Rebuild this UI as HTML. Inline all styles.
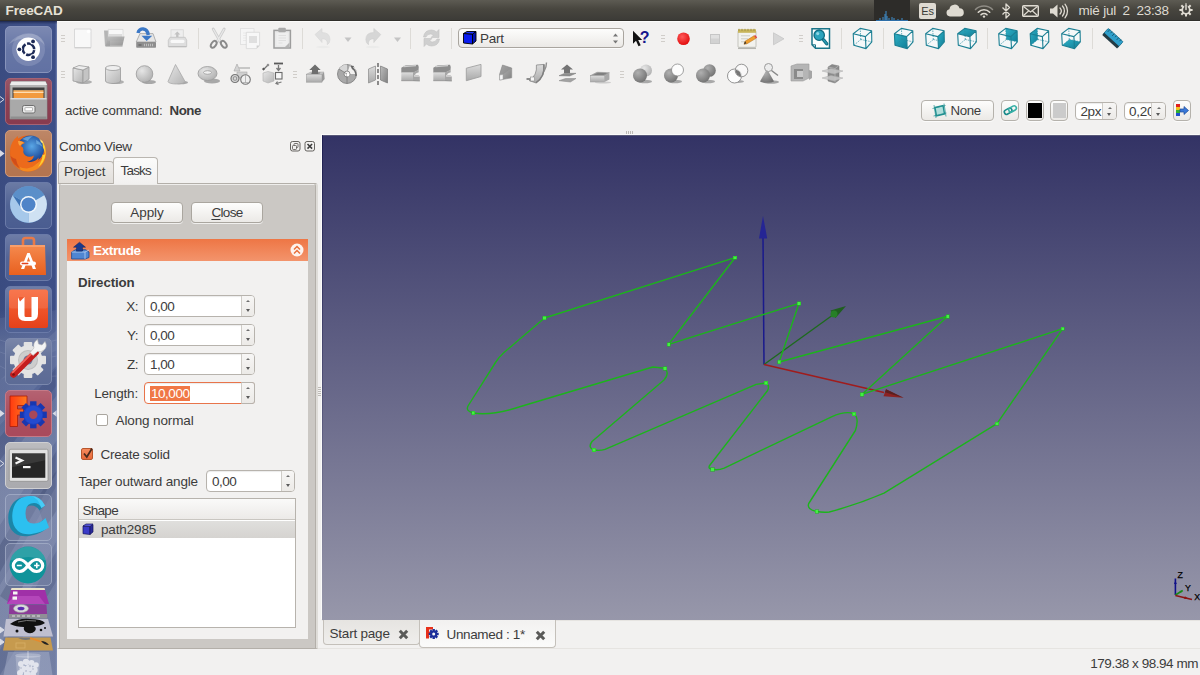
<!DOCTYPE html>
<html><head><meta charset="utf-8"><title>FreeCAD</title>
<style>
*{box-sizing:border-box;margin:0;padding:0}
html,body{width:1200px;height:675px;overflow:hidden;background:#f2f1f0;font-family:"Liberation Sans","DejaVu Sans",sans-serif;font-size:13px;color:#3c3c3c}
.abs{position:absolute}
#topbar{position:absolute;left:0;top:0;width:1200px;height:21px;background:linear-gradient(#5d5b53,#48463f 45%,#3c3b37);border-bottom:1px solid #2f2e2a}
#topbar .title{position:absolute;left:5.500px;top:2px;font-weight:bold;font-size:13.500px;line-height:17px;color:#e6e1d6;letter-spacing:-.1px}
#launcher{position:absolute;left:0;top:21px;width:57px;height:654px;background:linear-gradient(90deg,#3a4b80,#3f5189 60%,#3c4e86);overflow:hidden}
.tile{position:absolute;left:5px;width:46px;height:46px;border-radius:5px;border:1px solid rgba(255,255,255,.28);overflow:hidden}
.txt{position:absolute;white-space:nowrap;line-height:16px}
.btn{position:absolute;border:1px solid #b5b2ac;border-radius:4px;background:linear-gradient(#fdfdfc,#ebe9e6);box-shadow:0 1px 0 rgba(255,255,255,.7)}
.spin{position:absolute;border:1px solid #b7b3ad;border-radius:4px;background:#fff;box-shadow:inset 0 1px 1px rgba(0,0,0,.08)}
.spin .ar{position:absolute;right:0;top:0;bottom:0;width:13px;border-left:1px solid #cfccc7;background:linear-gradient(#f7f6f5,#eceae7);border-radius:0 3px 3px 0}
.spin .ar:before{content:"";position:absolute;left:50%;margin-left:-2px;top:22%;border:2px solid transparent;border-top:0;border-bottom:2.500px solid #6e6e6e}
.spin .ar:after{content:"";position:absolute;left:50%;margin-left:-2.500px;bottom:20%;border:2.500px solid transparent;border-bottom:0;border-top:3px solid #5a5a5a}
.spin span{position:absolute;left:5px;top:50%;margin-top:-7px;line-height:16px;white-space:nowrap;font-size:13.500px;letter-spacing:-.5px}
.sep{position:absolute;width:1px;background:#dddbd7}
.hnd{position:absolute;width:4px;height:7px;background:repeating-linear-gradient(#d0cdc9 0 1px,transparent 1px 3px)}
svg{position:absolute;overflow:visible}
</style></head><body>
<div id="topbar">
<div class="title">FreeCAD</div>
<div class="abs" style="left:874px;top:0;width:36px;height:21px;background:#2d2c29"></div>
<svg style="left:874px;top:0" width="36" height="21" viewBox="0 0 36 21"><path d="M2 20.5h32" stroke="#2d6ea8" stroke-width="1"/><path d="M6 20v-2M9 20v-3M11 20v-6M12 20v-9M13 20v-4M15 20v-2M18 20v-3M20 20v-2M24 20v-1M28 20v-2" stroke="#3f8fd0" stroke-width="1"/></svg>
<div class="abs" style="left:919px;top:3px;width:17px;height:16px;background:#dfdbd2;border-radius:2px;color:#3c3b37;font-size:11px;line-height:16px;text-align:center;letter-spacing:-.2px">Es</div>
<svg style="left:945px;top:3px" width="20" height="15" viewBox="0 0 20 15"><path d="M5 13.5a3.7 3.7 0 0 1-.6-7.3A5.2 5.2 0 0 1 14.500 5.200 4.200 4.200 0 0 1 15.500 13.500z" fill="#dfdbd2"/></svg>
<svg style="left:974px;top:4px" width="20" height="14" viewBox="0 0 20 14" fill="none" stroke-linecap="round"><path d="M1.500 5.500a12 12 0 0 1 17 0" stroke="#8f8c85" stroke-width="1.600"/><path d="M4.300 8.200a8 8 0 0 1 11.400 0" stroke="#dfdbd2" stroke-width="1.600"/><path d="M7 10.800a4.300 4.300 0 0 1 6 0" stroke="#dfdbd2" stroke-width="1.600"/><circle cx="10" cy="12.600" r="1.200" fill="#dfdbd2"/></svg>
<svg style="left:1001px;top:3px" width="10" height="16" viewBox="0 0 10 16" fill="none"><path d="M1.500 4.500l7 7-3.500 3.500v-14l3.500 3.500-7 7" stroke="#dfdbd2" stroke-width="1.300" stroke-linejoin="round"/></svg>
<svg style="left:1022px;top:5px" width="17" height="12" viewBox="0 0 17 12" fill="none"><rect x=".7" y=".7" width="15.600" height="10.600" rx="1" stroke="#dfdbd2" stroke-width="1.400"/><path d="M1.500 1.500l7 5.500 7-5.500M1.500 10.500l5-4.500M15.500 10.500l-5-4.500" stroke="#dfdbd2" stroke-width="1.200"/></svg>
<svg style="left:1049px;top:3px" width="20" height="16" viewBox="0 0 20 16" fill="none" stroke-linecap="round"><path d="M1 5.500h3l4.500-4v13l-4.500-4h-3z" fill="#dfdbd2"/><path d="M11 5a4.500 4.500 0 0 1 0 6M13.500 3a7.500 7.500 0 0 1 0 10M16 1.200a10.500 10.500 0 0 1 0 13.600" stroke="#dfdbd2" stroke-width="1.300"/></svg>
<div class="txt" style="left:1078.500px;top:2px;font-size:13.500px;line-height:17px;color:#dfdbd2;letter-spacing:-.2px">mié jul</div><div class="txt" style="left:1122.500px;top:2px;font-size:13.500px;line-height:17px;color:#dfdbd2">2</div><div class="txt" style="left:1136.500px;top:2px;font-size:13.500px;line-height:17px;color:#dfdbd2;letter-spacing:-.3px">23:38</div>
<svg style="left:1179px;top:3px" width="14" height="14" viewBox="0 0 18 17" fill="none"><g stroke="#dfdbd2" stroke-width="2.600"><path d="M9 0v17M.5 8.500h17M3 2.500l12 12M15 2.500l-12 12"/></g><circle cx="9" cy="8.500" r="6" fill="#dfdbd2"/><circle cx="9" cy="8.500" r="3.700" fill="#45443f"/><path d="M9 1.500v7" stroke="#45443f" stroke-width="4.400"/><path d="M9 2.500v5.500" stroke="#dfdbd2" stroke-width="1.900" stroke-linecap="round"/></svg>
</div>
<div id="launcher"></div>
<svg style="left:0;top:0" width="57" height="675" viewBox="0 0 57 675">
<defs>
<linearGradient id="tg" x1="0" y1="0" x2="0" y2="1"><stop offset="0" stop-color="#fff" stop-opacity=".32"/><stop offset=".5" stop-color="#fff" stop-opacity=".08"/><stop offset="1" stop-color="#fff" stop-opacity=".02"/></linearGradient>
<linearGradient id="wall" x1="0" y1="0" x2="0" y2="1"><stop offset="0" stop-color="#8f9bb8" stop-opacity="0"/><stop offset=".44" stop-color="#8f9bb8" stop-opacity="0"/><stop offset=".5" stop-color="#8f9bb8" stop-opacity=".3"/><stop offset="1" stop-color="#8f9bb8" stop-opacity=".4"/></linearGradient>
<linearGradient id="wall2" x1="0" y1="0" x2="0" y2="1"><stop offset="0" stop-color="#a3a8b8" stop-opacity="0"/><stop offset=".58" stop-color="#a3a8b8" stop-opacity="0"/><stop offset=".72" stop-color="#a3a8b8" stop-opacity=".3"/><stop offset="1" stop-color="#a3a8b8" stop-opacity=".3"/></linearGradient><radialGradient id="ffb" cx=".55" cy=".4" r=".6"><stop offset="0" stop-color="#5aa7e6"/><stop offset="1" stop-color="#123a8c"/></radialGradient>
<linearGradient id="org" x1="0" y1="0" x2="0" y2="1"><stop offset="0" stop-color="#f58a4e"/><stop offset="1" stop-color="#e8601f"/></linearGradient>
<linearGradient id="u1" x1="0" y1="0" x2="0" y2="1"><stop offset="0" stop-color="#f8683a"/><stop offset="1" stop-color="#e6411a"/></linearGradient>
<linearGradient id="fc" x1="0" y1="0" x2="1" y2="0"><stop offset="0" stop-color="#ff3a10"/><stop offset="1" stop-color="#ff7a20"/></linearGradient>
</defs>
<rect x="0" y="21" width="57" height="654" fill="url(#wall)"/><rect x="0" y="21" width="57" height="654" fill="url(#wall2)"/>
<g opacity=".9"><path d="M0 318l57-8v40l-57 30z" fill="#8a96b8" opacity=".18"/>
<path d="M0 380l57-50v35l-57 60z" fill="#a9b3cc" opacity=".16"/>
<path d="M0 437l57-70v18l-57 75z" fill="#27345f" opacity=".22"/>
<path d="M0 470l57-75v45l-57 85z" fill="#b4bcd2" opacity=".2"/>
<path d="M0 545l57-95v22l-57 100z" fill="#222e58" opacity=".25"/>
<path d="M0 585l57-100v55l-57 105z" fill="#b9c0d6" opacity=".2"/>
<path d="M0 650l57-100v30l-57 95z" fill="#2a3663" opacity=".2"/>
<path d="M0 596l20-34 12 4-18 40z" fill="#1c274f" opacity=".22"/>
<path d="M36 500l21-30v40l-12 18z" fill="#1c274f" opacity=".2"/>
<path d="M0 340q20 10 57 0M0 352q25 12 57 4M0 366q20 14 57 10" stroke="#c5cce0" stroke-width=".7" fill="none" opacity=".25"/>
</g>
<!-- 1 dash -->
<rect x="5.500" y="26.500" width="46" height="46" rx="4.500" fill="#6070a2" stroke="#8793bb"/>
<rect x="6" y="27" width="45" height="45" rx="4" fill="url(#tg)" opacity=".55"/>
<circle cx="28.500" cy="49.500" r="16.500" fill="#9aa6c8" opacity=".4"/><path d="M9 44q8-12 24-10 10 2 12 12-6-9-16-8-12 0-20 6z" fill="#fff" opacity=".18"/>
<circle cx="28.300" cy="49.300" r="11.700" fill="#fff"/>
<circle cx="28.500" cy="49.300" r="5.700" fill="none" stroke="#1d2a57" stroke-width="2.500" stroke-dasharray="10.340 1.600" stroke-dashoffset="-.8"/>
<g fill="#fff"><circle cx="19.400" cy="49.300" r="2.900"/><circle cx="33.050" cy="41.400" r="2.900"/><circle cx="33.050" cy="57.200" r="2.900"/></g><circle cx="19.400" cy="49.300" r="1.900" fill="#1d2a57"/><circle cx="33.050" cy="41.400" r="1.900" fill="#1d2a57"/><circle cx="33.050" cy="57.200" r="1.900" fill="#1d2a57"/>
<!-- 2 files -->
<rect x="5.500" y="78.500" width="46" height="46" rx="4.500" fill="#87394d" stroke="#a56374"/>
<rect x="6" y="79" width="45" height="45" rx="4" fill="url(#tg)" opacity=".45"/>
<path d="M11.500 81.500h34l1.500 3v34.500h-37v-34.500z" fill="#b4b4b4" stroke="#858585" stroke-width=".8"/>
<path d="M11.500 81.500h34l1.500 3.500h-37z" fill="#ececec"/>
<rect x="12.500" y="87.500" width="32" height="10.500" fill="#3f3f3f"/>
<path d="M13.500 90.500h30v7.500h-30z" fill="#f29a3e"/><path d="M13.500 92.300h30" stroke="#ffe9c8" stroke-width="1.100"/><path d="M13.500 90.800h30" stroke="#ffc27a" stroke-width=".8"/>
<path d="M10.500 98h36v20.500h-36z" fill="#a9a9a9"/><path d="M10.500 98h36v1.600h-36z" fill="#dadada"/><path d="M10.500 116.500h36v2.500h-36z" fill="#8f8f8f"/>
<rect x="22.500" y="105.500" width="12.500" height="7.500" rx="1.800" fill="#ececec" stroke="#6f6f6f" stroke-width="1"/><rect x="25" y="107.600" width="7.500" height="3.300" rx=".5" fill="#fff" stroke="#8a8a8a" stroke-width=".6"/>
<!-- 3 firefox -->
<rect x="5.500" y="130.500" width="46" height="46" rx="4.500" fill="#b3734e" stroke="#cf9b7c"/>
<rect x="6" y="131" width="45" height="45" rx="4" fill="url(#tg)" opacity=".45"/>
<circle cx="28" cy="153.500" r="18" fill="#e8661a"/>
<path d="M28 171.500a18 18 0 0 0 17.500-22q-2 14-17.500 17.500-9 1-15-5.500 5 10 15 10z" fill="#f58a1f"/>
<circle cx="30.500" cy="149" r="13.500" fill="url(#ffb)"/>
<path d="M22 139q5-3.500 11-2.500-4 1.500-5 4.500zM36 140q5 2 6.500 7-3-3-6-3z" fill="#8fd0f5" opacity=".5"/>
<path d="M10 150q1-9 8-14-.5 3 1 5 3.500-.5 6 2-3 .5-4 3 2.500 1 2.500 4-1 3 2 5.500 4 2.500 8.500 0-1 5-7 6.500 7 1 12-4.500-2 10-12 11-9 0-14-8-3-5-2.500-10.500z" fill="#ec6a1b"/>
<path d="M18 141q3.500-.5 6 2-3 .5-4 3-2-2-2-5z" fill="#f9a03a"/>
<path d="M41.500 140q5 6 4 14.500-1 8-7.500 12.500 4.500-6 4.500-12.500 1.500 1 2.500-.5-.5-4-2-6.500 0-3-1.500-7.500z" fill="#ffcf33"/>
<path d="M39 138.500q3 1.500 4.500 5-1-1-2.500-1-.5-2.500-2-4z" fill="#ffe27a"/>
<path d="M10.500 156q2 9 10 13-4-5-4.500-10-3-.5-5.500-3z" fill="#c9461a" opacity=".8"/>
<!-- 4 chromium -->
<rect x="5.500" y="182.500" width="46" height="46" rx="4.500" fill="#485b8f" stroke="#6a7aa8"/>
<rect x="6" y="183" width="45" height="45" rx="4" fill="url(#tg)" opacity=".6"/>
<circle cx="28.500" cy="204.500" r="18.300" fill="#6ea1d4"/>
<path d="M28.500 204.500L12.700 195.300A18.300 18.300 0 0 1 44.300 195.300z" fill="#5b8fc9"/>
<path d="M28.500 204.500L44.300 195.300A18.300 18.300 0 0 1 28.500 222.800z" fill="#cfe1f3"/>
<path d="M28.500 204.500L28.500 222.800A18.300 18.300 0 0 1 12.700 195.300z" fill="#a6c8ea"/>
<path d="M12.700 195.300l9 13.700 6.800-4.500z" fill="#3e74b5"/>
<circle cx="28.500" cy="204.500" r="8.500" fill="#f2f7fc"/><circle cx="28.500" cy="204.500" r="7" fill="#4f84c8"/>
<!-- 5 software center -->
<rect x="5.500" y="234.500" width="46" height="46" rx="4.500" fill="#4b5d91" stroke="#6a7aa8"/>
<rect x="6" y="235" width="45" height="45" rx="4" fill="url(#tg)" opacity=".6"/>
<path d="M23 249v-8.500q0-2.500 2.500-2.500h6q2.500 0 2.500 2.500v8.500" fill="none" stroke="#e87a48" stroke-width="2.600"/>
<path d="M10 245h35l1 30h-37z" fill="url(#org)"/><path d="M10 245h35v2h-35z" fill="#f9a878" opacity=".7"/>
<path d="M21 269l6.300-16h2.400l6.300 16h-3.200l-4.300-12-4.300 12z" fill="#fff"/><rect x="20" y="261.500" width="16" height="4" rx="2" fill="#fff"/><rect x="21.500" y="262.800" width="7" height="1.400" rx=".7" fill="#e2431e"/>
<!-- 6 ubuntu one -->
<rect x="5.500" y="286.500" width="46" height="46" rx="4.500" fill="#4d5f92" stroke="#6a7aa8"/>
<rect x="6" y="287" width="45" height="45" rx="4" fill="url(#tg)" opacity=".6"/>
<rect x="9" y="289.500" width="39" height="38.500" rx="2.500" fill="url(#u1)"/><rect x="9" y="289.500" width="39" height="19" rx="2.500" fill="#fff" opacity=".1"/>
<path d="M18 297h6.500v18.500q0 1.500 1.500 1.500h5.500v-20h6.500v17q0 7-7 7h-6q-7 0-7-7z" fill="#fff"/><path d="M18 297h6.500l-4.500 4.500z" fill="#f05a30"/>
<!-- 7 settings -->
<rect x="5.500" y="338.500" width="46" height="46" rx="4.500" fill="#5a6994" stroke="#7b88ad"/>
<rect x="6" y="339" width="45" height="45" rx="4" fill="url(#tg)" opacity=".6"/>
<g transform="translate(28 360)"><g fill="#e2e2e2"><rect x="-4.300" y="-18" width="8.600" height="36" rx="1"/><rect x="-4.300" y="-18" width="8.600" height="36" rx="1" transform="rotate(45)"/><rect x="-4.300" y="-18" width="8.600" height="36" rx="1" transform="rotate(90)"/><rect x="-4.300" y="-18" width="8.600" height="36" rx="1" transform="rotate(135)"/></g><circle r="14.500" fill="#e4e4e4"/><circle r="10" fill="#bcbcbc"/><circle r="9" fill="#cdcdcd"/><circle r="4.500" fill="#6a7697"/></g>
<path d="M13.500 374.500L35.500 352.500" stroke="#c41d1d" stroke-width="6.500" stroke-linecap="round"/><path d="M12.500 372.500L33.500 351.500" stroke="#f0645a" stroke-width="1.800" stroke-linecap="round"/><circle cx="13.500" cy="374.500" r="1.300" fill="#7a1010"/>
<path d="M33 355.500l-3-3 4-4.500q-1.500-5.500 3.500-8.500l1 4.500 3.500 1 3-3.500q3 5-1 8.500-3 2.500-6.500 1.500z" fill="#f4f4f4" stroke="#b5b5b5" stroke-width=".6"/>
<!-- 8 freecad -->
<rect x="5.500" y="390.500" width="46" height="46" rx="4.500" fill="#a8485a" stroke="#c47a88"/>
<rect x="6" y="391" width="45" height="45" rx="4" fill="url(#tg)" opacity=".45"/>
<path d="M10 396h17v9.500h-9.500v3.500h6v6h-6v11.500h-7.500z" fill="url(#fc)" stroke="#a81c08" stroke-width=".8"/>
<g transform="translate(33.300 414.800)"><g fill="#1837b0"><rect x="-3.200" y="-13.500" width="6.400" height="27"/><rect x="-3.200" y="-13.500" width="6.400" height="27" transform="rotate(45)"/><rect x="-3.200" y="-13.500" width="6.400" height="27" transform="rotate(90)"/><rect x="-3.200" y="-13.500" width="6.400" height="27" transform="rotate(135)"/></g><circle r="10" fill="#1d41c4"/><circle r="9" fill="#2a52d8" opacity=".6"/><circle r="4.200" fill="#a8485a"/></g>
<!-- 9 terminal -->
<rect x="5.500" y="442.500" width="46" height="46" rx="4.500" fill="#a9a9ad" stroke="#cfcfd2"/>
<rect x="6" y="443" width="45" height="45" rx="4" fill="url(#tg)" opacity=".7"/>
<rect x="9.300" y="449.300" width="38.700" height="32" rx="1.500" fill="#e2e2e2" stroke="#8a8a8a" stroke-width=".7"/>
<rect x="12" y="453.300" width="33.300" height="24.500" fill="#262626"/><path d="M12 453.300h33.300v7l-33.300 7z" fill="#fff" opacity=".09"/>
<path d="M15.500 457.500l6.500 3-6.500 3" fill="none" stroke="#f4f4f4" stroke-width="2.200"/><rect x="23" y="466" width="7.500" height="2.200" fill="#f4f4f4"/>
<!-- 10 cura C -->
<rect x="5.500" y="494.500" width="46" height="46" rx="4.500" fill="#8c96b5" fill-opacity=".4" stroke="#aab3cc" stroke-opacity=".7"/>
<path d="M43 507q-4.500-10-15.500-10-16 0-19 17-1.500 13 6 19 5.500 4 14.500 3 10-1.500 17-7l-3-9q-5 5-12 5-7.500 0-7.500-9.500 0-10 8-10 5 0 8 5z" fill="#1b86a8"/>
<path d="M45 505.500q-4.500-9.500-14.500-9.500-15.500 0-18 16.500-1.500 12.500 5.500 18.500 5 4 13.500 3 10-1.500 17.500-6.500l-3.500-9.500q-5 5.500-12 5.500-8 0-8-10 0-10.500 8.500-10.500 5 0 7.500 5z" fill="#2cc0f0"/>
<path d="M41.500 508l3.500-2.500q-4.500-9.500-14.500-9.500 7 1 11 12z" fill="#5ad4fa" opacity=".6"/>
<!-- 11 arduino -->
<rect x="5.500" y="543.500" width="46" height="42" rx="4.500" fill="#8c96b5" fill-opacity=".35" stroke="#aab3cc" stroke-opacity=".7"/>
<circle cx="28" cy="565" r="18.400" fill="#10939a"/><path d="M10.200 560.500a18.400 18.400 0 0 1 35.600 0q-17-7-35.600 0z" fill="#fff" opacity=".13"/>
<g transform="translate(-.7 .5)"><path d="M28.700 565c-2.700-3.800-5-6-8.700-6a6 6 0 0 0 0 12c3.700 0 6-2.200 8.700-6 2.700 3.800 5 6 8.700 6a6 6 0 0 0 0-12c-3.700 0-6 2.200-8.700 6z" fill="none" stroke="#fff" stroke-width="3.200"/><path d="M17.500 565h5M34.800 565h5.400M37.500 562.300v5.400" stroke="#fff" stroke-width="1.600"/></g>
<!-- stacked -->
<path d="M11.500 588h33l4.500 16h-42z" fill="#a030a8"/><path d="M11.500 588h33l.6 2h-34.200z" fill="#e9e3c8"/><path d="M14 596h25l6 8h-38z" fill="#c85ccc" opacity=".5"/>
<rect x="13" y="591.500" width="4.500" height="3" fill="#f4f4f4"/><rect x="12.500" y="596.500" width="4.500" height="3.200" fill="#f4f4f4"/>
<path d="M9.500 604.500h37l.8 13.500h-38.600z" fill="#8c3a98"/><path d="M9 614h38.200l.2 4.500h-38.600z" fill="#8f8f96"/><path d="M12 616h30" stroke="#ddd" stroke-width="1" stroke-dasharray="3 2"/>
<ellipse cx="21" cy="608.500" rx="7.500" ry="4" fill="#d9d9dc" stroke="#9a9a9a" stroke-width=".6"/><ellipse cx="21" cy="608.500" rx="3.500" ry="1.800" fill="#5a2bb0"/>
<path d="M6 619h42l5 17.500h-49.500z" fill="#bfbfd0"/>
<path d="M10 624q8-6 20-5 12 0 15 4-4 3-11 3 3 2 1 5-4 4-9 1-3-2-2-5-8 0-14-3z" fill="#111"/><circle cx="17" cy="631" r="1.500" fill="#111"/><circle cx="41" cy="630" r="1.300" fill="#111"/><circle cx="45" cy="628" r="1" fill="#111"/><path d="M18 622q8-2.500 18-1" stroke="#777" stroke-width="1" fill="none"/>
<path d="M5.500 637.500h45l2.500 13h-50z" fill="#c69a4e"/><path d="M18 638q8 4 15 0z" fill="#777"/><path d="M30 638l12 4" stroke="#e88a2a" stroke-width="1.500"/><path d="M41 641q5 0 8 4-5 0-8-4z" fill="#222"/><rect x="16" y="643" width="9" height="5" fill="none" stroke="#d8b068" stroke-width=".8"/>
<path d="M8 652h41l3.500 23h-49z" fill="#b4bbd2" opacity=".4"/>
<ellipse cx="28" cy="655.500" rx="12.500" ry="1.800" fill="#dfe2ec" opacity=".35" stroke="#eef0f5" stroke-width=".7"/>
<path d="M15.500 656l1.500 19h22l1.500-19" fill="#e8eaf2" opacity=".25"/>
<g fill="#f2f3f7" opacity=".8"><circle cx="21" cy="664" r="3"/><circle cx="26" cy="662" r="3.200"/><circle cx="31.500" cy="663" r="3"/><circle cx="36" cy="665" r="2.800"/><circle cx="23" cy="669" r="3.500"/><circle cx="29" cy="668" r="3.500"/><circle cx="34.500" cy="670" r="3.200"/><circle cx="20" cy="673" r="3"/><circle cx="27" cy="674" r="3.200"/><circle cx="33" cy="674" r="3"/></g>
<g fill="#aeb4c8" opacity=".6"><circle cx="24" cy="665" r="1"/><circle cx="30" cy="666" r="1.200"/><circle cx="33" cy="669" r="1"/><circle cx="26" cy="671" r="1.100"/><circle cx="21" cy="668" r="1"/></g>
<path d="M28 651v8" stroke="#fff" stroke-width=".8" opacity=".6"/>
<!-- arrows -->
<path d="M0 96.500l4 3-4 3" fill="none" stroke="#d8dbe6" stroke-width="1"/>
<path d="M0 150l4.500 3.500-4.500 3.500z" fill="#d8dbe6"/>
<path d="M0 410l4.500 3.500-4.500 3.500z" fill="#d8dbe6"/><path d="M57 410l-4.500 3.500 4.500 3.500z" fill="#d8dbe6"/>
<path d="M0 460.500l4 3-4 3" fill="none" stroke="#d8dbe6" stroke-width="1"/>
<path d="M0 627l4 3-4 3M0 639l4 3-4 3" fill="#d8dbe6" stroke="#d8dbe6" stroke-width="1"/>
<rect x="56" y="21" width="1" height="654" fill="#8696c0" opacity=".55"/><rect x="55" y="21" width="1" height="654" fill="#8696c0" opacity=".15"/><rect x="0" y="21" width="57" height="1" fill="#0c1433" opacity=".55"/><rect x="0" y="22" width="57" height="1" fill="#0c1433" opacity=".3"/><rect x="0" y="23" width="57" height="1" fill="#0c1433" opacity=".12"/>
</svg>
<svg style="left:0;top:0" width="1200" height="135" viewBox="0 0 1200 135">
<defs>
<linearGradient id="gl" x1="0" y1="0" x2="1" y2="1"><stop offset="0" stop-color="#e6e6e6"/><stop offset="1" stop-color="#b4b4b4"/></linearGradient>
<linearGradient id="gd" x1="0" y1="0" x2="1" y2="1"><stop offset="0" stop-color="#bdbdbd"/><stop offset="1" stop-color="#808080"/></linearGradient>
<linearGradient id="gv" x1="0" y1="0" x2="0" y2="1"><stop offset="0" stop-color="#dcdcdc"/><stop offset="1" stop-color="#a9a9a9"/></linearGradient>
<radialGradient id="gs" cx=".35" cy=".3" r=".8"><stop offset="0" stop-color="#e6e6e6"/><stop offset="1" stop-color="#adadad"/></radialGradient>
<radialGradient id="gsd" cx=".35" cy=".3" r=".8"><stop offset="0" stop-color="#b0b0b0"/><stop offset="1" stop-color="#6e6e6e"/></radialGradient>
<radialGradient id="red" cx=".4" cy=".35" r=".7"><stop offset="0" stop-color="#ff5a5a"/><stop offset="1" stop-color="#e00808"/></radialGradient>
<linearGradient id="teal" x1="0" y1="0" x2="1" y2="1"><stop offset="0" stop-color="#2fb0c6"/><stop offset="1" stop-color="#0f7f98"/></linearGradient>
</defs>
<!-- row1 -->
<g transform="translate(83 38)"><path d="M-8.500-9h16.500v18.500h-16.500z" fill="#f8f8f8" stroke="#d6d6d6" stroke-width=".9"/><path d="M-8.500 9.800h16.500" stroke="#cfcfcf" stroke-width="1.200"/><circle cx="5.500" cy="-6.500" r="1.800" fill="#fff"/></g>
<g transform="translate(115 38)"><path d="M-11-7.500h5l1 1.500v14h-5z" fill="#b5b5b5"/><path d="M-6.700-8.600h14.700v11h-14.700z" fill="#f7f7f7" stroke="#d4d4d4" stroke-width=".7"/><path d="M-6-4h13v6h-13z" fill="#dcdcdc"/><path d="M-7-1.500h16.600l-2.100 9.200h-16.700z" fill="url(#gd)" opacity=".8"/><path d="M-9.500 8.200h17" stroke="#a2a2a2" stroke-width=".8"/></g>
<g transform="translate(146 38)"><path d="M-6-4.400h13l3 8.400h-19.800z" fill="#e6e6e6" stroke="#a0a0a0" stroke-width=".8"/><rect x="-9.800" y="4" width="19.800" height="5.700" rx=".8" fill="#8e8e8e"/><path d="M-7.500 7h3" stroke="#666" stroke-width="1.400"/><path d="M-2 7h10" stroke="#bdbdbd" stroke-width="2.500" stroke-dasharray="1 1"/><path d="M-8-5C-7-10.500 1.500-11 2.200-3" fill="none" stroke="#3b78c6" stroke-width="3.400"/><path d="M-4.500-2.300h10.800l-5.600 5.300z" fill="#3b78c6"/></g>
<g transform="translate(177 38)"><rect x="-6" y="-8.200" width="12.300" height="8" fill="#eeeeee" stroke="#d6d6d6" stroke-width=".8"/><path d="M.3-6.500l3 3h-1.800v2.500h-2.400v-2.500h-1.800z" fill="#c2c2c2"/><path d="M-7-.7h15.200l1.500 3v6.200h-18.400v-6.200z" fill="#dedede" stroke="#c4c4c4" stroke-width=".8"/><rect x="-6.500" y="1.800" width="14" height="3.200" rx="1.500" fill="#f8f8f8"/><path d="M-8.500 8.800h18" stroke="#b8b8b8" stroke-width="1"/></g>
<g transform="translate(219 38)" fill="none"><path d="M-5.800-9l7.300 13M5.200-9l-7.300 13" stroke="#cdcdcd" stroke-width="2.800" stroke-linecap="round"/><path d="M-5.800-9l7.300 13M5.200-9l-7.300 13" stroke="#e9e9e9" stroke-width="1.200"/><ellipse cx="-5.300" cy="6.300" rx="2.300" ry="3.800" stroke="#8a8a8a" stroke-width="1.900" transform="rotate(35 -5.300 6.300)"/><ellipse cx="4.800" cy="6.300" rx="2.300" ry="3.800" stroke="#8a8a8a" stroke-width="1.900" transform="rotate(-35 4.800 6.300)"/></g>
<g transform="translate(250 38)"><rect x="-9.600" y="-9.400" width="13.600" height="15.800" fill="#f5f5f5" stroke="#dedede" stroke-width=".8"/><path d="M-7-5h8M-7-2.500h3M-7 0h3M-7 2.500h3" stroke="#e6e6e6" stroke-width=".8"/><path d="M-3.700-5.700h13.300v13.300l-3 3h-10.300z" fill="#f7f7f7" stroke="#d8d8d8" stroke-width=".8"/><rect x="-1" y="-2" width="8" height="7" fill="#dfdfdf"/><path d="M6.600 10.600v-3h3z" fill="#cfcfcf"/></g>
<g transform="translate(282 38)"><rect x="-8" y="-7.600" width="16.400" height="17.600" fill="#e9e9e9" stroke="#9d9d9d" stroke-width="1.500"/><rect x="-5.500" y="-5" width="11.400" height="12.500" fill="#efefef"/><path d="M-3.500-2.500h7.500M-3.500 0h7.500M-3.500 2.500h7.500M-3.500 5h4" stroke="#dfdfdf" stroke-width="1"/><rect x="-3.700" y="-10.200" width="7.500" height="4.500" rx="1" fill="#a9a9a9"/><path d="M3 9l4.500-4.500v4.500z" fill="#b5b5b5"/></g>
<g transform="translate(323 37.500)"><path d="M-8-3l7-6v4q8 0 8 7 0 3.500-2.700 5.200.8-6-5.300-6v3.800z" fill="#dfdfdf" stroke="#d6d6d6" stroke-width=".6"/><ellipse cx="0" cy="9.500" rx="7" ry="1.200" fill="#ebebea"/></g>
<path d="M344.500 37.500h7l-3.500 4.500z" fill="#c4c4c4"/>
<g transform="translate(372.800 37.500)"><path d="M8-3l-7-6v4q-8 0-8 7 0 3.500 2.700 5.200-.8-6 5.300-6v3.800z" fill="#d6d6d6" stroke="#cecece" stroke-width=".6"/><ellipse cx="0" cy="9.500" rx="7" ry="1.200" fill="#ebebea"/></g>
<path d="M394 37.500h7l-3.500 4.500z" fill="#c4c4c4"/>
<g transform="translate(431.500 38)" fill="#cfcfcf" stroke="#c2c2c2" stroke-width=".6"><path d="M-8-1q1-7 8-7 3 0 5 2l2.500-2.500v8h-8l2.500-2.500q-1.500-1-3-1-3.500 0-4.500 3z"/><path d="M8 1q-1 7-8 7-3 0-5-2l-2.500 2.500v-8h8l-2.500 2.500q1.500 1 3 1 3.500 0 4.500-3z"/></g>
<!-- whatsthis -->
<g transform="translate(640 38.700)"><path d="M-7-8v13l3-3 2.500 5.500 2.200-1-2.500-5.300h4z" fill="#111"/><text x="-.3" y="3.800" font-family="Liberation Sans,sans-serif" font-weight="bold" font-size="16" fill="#16168c">?</text></g>
<circle cx="683.500" cy="38.700" r="6.300" fill="url(#red)"/>
<rect x="710.500" y="34.500" width="9" height="9" fill="#d2d2d2" stroke="#c6c6c6"/><rect x="711" y="35" width="8" height="3.500" fill="#e0e0e0"/>
<g transform="translate(747 38.800)"><rect x="-9" y="-8" width="18" height="16.500" rx="1" fill="#f2f2ee" stroke="#b9b9b0" stroke-width=".8"/><rect x="-9" y="-9.500" width="18" height="3.500" fill="#c8b55a"/><path d="M-8-8v-2M-5-8v-2M-2-8v-2M1-8v-2M4-8v-2M7-8v-2" stroke="#8a7a30" stroke-width=".7"/><path d="M-6-3h9M-6 0h7M-6 3h5" stroke="#c9c9c2" stroke-width=".9"/><path d="M-3 5.500l1-3 9-5.500 2 2.500-9 5.500z" fill="#f0a030" stroke="#b06a10" stroke-width=".5"/><path d="M7-3l2 2.500 1.200-.8-2-2.500z" fill="#e04040"/><path d="M-3 5.500l1-3 1.500 2z" fill="#333"/><path d="M-9 9.500h18" stroke="#b5b5b0" stroke-width="1.500"/></g>
<path d="M773.500 32.800l10.500 6-10.500 6z" fill="#d6d6d6" stroke="#c6c6c6" stroke-width=".8"/>
<g transform="translate(821 38.800)"><path d="M-9-10h17.500v19.500h-14l-3.500-3.500z" fill="#fcfefe" stroke="#1a7488" stroke-width="1.500"/><path d="M-9 6h3.500v3.500" fill="none" stroke="#1a7488" stroke-width="1"/><circle cx="-1.800" cy="-3.600" r="5.200" fill="#2ba3bc" stroke="#0e6c82" stroke-width="1.300"/><path d="M2.500 1l3.200 4" stroke="#0e6c82" stroke-width="3.400" stroke-linecap="round"/><path d="M2.700 1.200l3 3.700" stroke="#2a9ab2" stroke-width="1.400" stroke-linecap="round"/><circle cx="-3.300" cy="-5.200" r="1.600" fill="#8fd6e4"/></g>
<g transform="translate(862.5 38)"><path d="M-9.3 -4.3L-2.3 -9.6L9.1 -7.2L9.3 3.8L3.5 10.6L-8.7 7.3z" fill="#f7fbfc" opacity=".7"/><path d="M-1.7 1.5L-2.3 -9.6M-1.7 1.5L9.3 3.8M-1.7 1.5L-8.7 7.3" fill="none" stroke="#2a8da0" stroke-width=".7" stroke-dasharray="1.5 1"/><path d="M-9.3 -4.3L-2.3 -9.6L9.1 -7.2L9.3 3.8L3.5 10.6L-8.7 7.3zM-9.3 -4.3L2.9 -1.4M2.9 -1.4L9.1 -7.2M2.9 -1.4L3.5 10.6" fill="none" stroke="#1b7f93" stroke-width="1.100" stroke-linejoin="round"/></g>
<g transform="translate(903.7 38)"><path d="M-9.3 -4.3L-2.3 -9.6L9.1 -7.2L9.3 3.8L3.5 10.6L-8.7 7.3z" fill="#f7fbfc" opacity=".7"/><path d="M-9.3 -4.3L2.9 -1.4L3.5 10.6L-8.7 7.3z" fill="url(#teal)"/><path d="M-1.7 1.5L-2.3 -9.6M-1.7 1.5L9.3 3.8M-1.7 1.5L-8.7 7.3" fill="none" stroke="#2a8da0" stroke-width=".7" stroke-dasharray="1.5 1"/><path d="M-9.3 -4.3L-2.3 -9.6L9.1 -7.2L9.3 3.8L3.5 10.6L-8.7 7.3zM-9.3 -4.3L2.9 -1.4M2.9 -1.4L9.1 -7.2M2.9 -1.4L3.5 10.6" fill="none" stroke="#1b7f93" stroke-width="1.100" stroke-linejoin="round"/></g>
<g transform="translate(935 38)"><path d="M-9.3 -4.3L-2.3 -9.6L9.1 -7.2L9.3 3.8L3.5 10.6L-8.7 7.3z" fill="#f7fbfc" opacity=".7"/><path d="M2.9 -1.4L9.1 -7.2L9.3 3.8L3.5 10.6z" fill="url(#teal)"/><path d="M-1.7 1.5L-2.3 -9.6M-1.7 1.5L9.3 3.8M-1.7 1.5L-8.7 7.3" fill="none" stroke="#2a8da0" stroke-width=".7" stroke-dasharray="1.5 1"/><path d="M-9.3 -4.3L-2.3 -9.6L9.1 -7.2L9.3 3.8L3.5 10.6L-8.7 7.3zM-9.3 -4.3L2.9 -1.4M2.9 -1.4L9.1 -7.2M2.9 -1.4L3.5 10.6" fill="none" stroke="#1b7f93" stroke-width="1.100" stroke-linejoin="round"/></g>
<g transform="translate(967 38)"><path d="M-9.3 -4.3L-2.3 -9.6L9.1 -7.2L9.3 3.8L3.5 10.6L-8.7 7.3z" fill="#f7fbfc" opacity=".7"/><path d="M-9.3 -4.3L2.9 -1.4L9.1 -7.2L-2.3 -9.6z" fill="url(#teal)"/><path d="M-1.7 1.5L-2.3 -9.6M-1.7 1.5L9.3 3.8M-1.7 1.5L-8.7 7.3" fill="none" stroke="#2a8da0" stroke-width=".7" stroke-dasharray="1.5 1"/><path d="M-9.3 -4.3L-2.3 -9.6L9.1 -7.2L9.3 3.8L3.5 10.6L-8.7 7.3zM-9.3 -4.3L2.9 -1.4M2.9 -1.4L9.1 -7.2M2.9 -1.4L3.5 10.6" fill="none" stroke="#1b7f93" stroke-width="1.100" stroke-linejoin="round"/></g>
<g transform="translate(1008 38)"><path d="M-9.3 -4.3L-2.3 -9.6L9.1 -7.2L9.3 3.8L3.5 10.6L-8.7 7.3z" fill="#f7fbfc" opacity=".7"/><path d="M-2.3 -9.6L9.1 -7.2L9.3 3.8L-1.7 1.5z" fill="url(#teal)"/><path d="M-1.7 1.5L-2.3 -9.6M-1.7 1.5L9.3 3.8M-1.7 1.5L-8.7 7.3" fill="none" stroke="#2a8da0" stroke-width=".7" stroke-dasharray="1.5 1"/><path d="M-9.3 -4.3L-2.3 -9.6L9.1 -7.2L9.3 3.8L3.5 10.6L-8.7 7.3zM-9.3 -4.3L2.9 -1.4M2.9 -1.4L9.1 -7.2M2.9 -1.4L3.5 10.6" fill="none" stroke="#1b7f93" stroke-width="1.100" stroke-linejoin="round"/></g>
<g transform="translate(1039.5 38)"><path d="M-9.3 -4.3L-2.3 -9.6L9.1 -7.2L9.3 3.8L3.5 10.6L-8.7 7.3z" fill="#f7fbfc" opacity=".7"/><path d="M-9.3 -4.3L-2.3 -9.6L-1.7 1.5L-8.7 7.3z" fill="url(#teal)"/><path d="M-1.7 1.5L-2.3 -9.6M-1.7 1.5L9.3 3.8M-1.7 1.5L-8.7 7.3" fill="none" stroke="#2a8da0" stroke-width=".7" stroke-dasharray="1.5 1"/><path d="M-9.3 -4.3L-2.3 -9.6L9.1 -7.2L9.3 3.8L3.5 10.6L-8.7 7.3zM-9.3 -4.3L2.9 -1.4M2.9 -1.4L9.1 -7.2M2.9 -1.4L3.5 10.6" fill="none" stroke="#1b7f93" stroke-width="1.100" stroke-linejoin="round"/></g>
<g transform="translate(1071 38)"><path d="M-9.3 -4.3L-2.3 -9.6L9.1 -7.2L9.3 3.8L3.5 10.6L-8.7 7.3z" fill="#f7fbfc" opacity=".7"/><path d="M-8.7 7.3L3.5 10.6L9.3 3.8L-1.7 1.5z" fill="url(#teal)"/><path d="M-1.7 1.5L-2.3 -9.6M-1.7 1.5L9.3 3.8M-1.7 1.5L-8.7 7.3" fill="none" stroke="#2a8da0" stroke-width=".7" stroke-dasharray="1.5 1"/><path d="M-9.3 -4.3L-2.3 -9.6L9.1 -7.2L9.3 3.8L3.5 10.6L-8.7 7.3zM-9.3 -4.3L2.9 -1.4M2.9 -1.4L9.1 -7.2M2.9 -1.4L3.5 10.6" fill="none" stroke="#1b7f93" stroke-width="1.100" stroke-linejoin="round"/></g>
<g transform="translate(1113 38) rotate(42)"><rect x="-10" y="-4" width="20" height="7.500" rx="1" fill="#2f9fcb" stroke="#1a6f8a" stroke-width=".8"/><rect x="-10" y="2" width="20" height="3" fill="#243b44"/><path d="M-8-4v3M-5-4v2M-2-4v3M1-4v2M4-4v3M7-4v2" stroke="#0e5068" stroke-width=".8"/></g>
<!-- row2 -->
<g transform="translate(81 74)"><ellipse cx="3" cy="8" rx="8" ry="2" fill="#b0b0b0"/><path d="M-8-6l10 2v13l-10-2z" fill="url(#gl)" stroke="#9b9b9b" stroke-width=".8"/><path d="M2-4l6-3v12l-6 4z" fill="#c4c4c4" stroke="#9b9b9b" stroke-width=".8"/><path d="M-8-6l6-2.500 10 1.500-6 3z" fill="#ededed" stroke="#9b9b9b" stroke-width=".8"/></g>
<g transform="translate(113 74)"><ellipse cx="4" cy="8" rx="7" ry="2" fill="#b0b0b0"/><path d="M-7.500-6v13a7.500 2.500 0 0 0 15 0v-13z" fill="url(#gl)" stroke="#9b9b9b" stroke-width=".8"/><ellipse cx="0" cy="-6" rx="7.500" ry="2.500" fill="#efefef" stroke="#9b9b9b" stroke-width=".8"/></g>
<g transform="translate(145 74)"><ellipse cx="4" cy="8" rx="7" ry="2" fill="#a8a8a8"/><circle cx="-.5" cy="0" r="8.300" fill="url(#gs)" stroke="#9b9b9b" stroke-width=".8"/></g>
<g transform="translate(177 74)"><ellipse cx="4" cy="8.500" rx="7" ry="1.800" fill="#a8a8a8"/><path d="M-1.500-9.500l9.500 17a8.500 2.500 0 0 1-17 0z" fill="url(#gl)" stroke="#a8a8a8" stroke-width=".8"/></g>
<g transform="translate(208 74)"><ellipse cx="4" cy="7" rx="8" ry="2.500" fill="#a8a8a8"/><ellipse cx="-.5" cy="-.5" rx="9.500" ry="7" fill="url(#gs)" stroke="#9b9b9b" stroke-width=".8"/><ellipse cx="-.5" cy="-1.500" rx="4" ry="1.800" fill="#f0f0f0" stroke="#9b9b9b" stroke-width=".8"/></g>
<g transform="translate(240 74)"><path d="M-6-3l3-7 3 7z" fill="#d4d4d4" stroke="#a5a5a5" stroke-width=".6"/><path d="M-1-6h11" stroke="#b9b9b9" stroke-width="1.500"/><rect x="-3" y="-2" width="10" height="6" fill="#cfcfcf" stroke="#aaa" stroke-width=".6"/><circle cx="-5" cy="4.500" r="4" fill="#d9d9d9" stroke="#777" stroke-width="1.200"/><rect x="-6.700" y="2.800" width="3.400" height="3.400" rx=".8" fill="none" stroke="#777" stroke-width=".8"/><circle cx="5.500" cy="5.500" r="4.800" fill="#efefef" stroke="#777" stroke-width="1.100"/><path d="M5.500 1v8M3 8.500h5" stroke="#aaa" stroke-width=".8"/></g>
<g transform="translate(272 74)"><path d="M-9-4l5-5" stroke="#777" stroke-width="1.300"/><path d="M-8.500-6.500l1.500 1.500-1.500 1.500-1.500-1.500z" fill="#555"/><path d="M-4-10.500l1.500 1.500-1.500 1.500-1.500-1.500z" fill="#888"/><path d="M2-10.500h9" stroke="#5a5a5a" stroke-width="1.800"/><path d="M6.500-9v5M4.500-6l2 2.500 2-2.500" fill="none" stroke="#7a7a7a" stroke-width="1.300"/><rect x="3.500" y="-1.500" width="6.500" height="6.500" fill="#f7f7f7" stroke="#6a6a6a" stroke-width="1.100"/><path d="M-9-1l5-1.500 6 1.500v8l-6 2-5-2z" fill="url(#gl)" stroke="#b0b0b0" stroke-width=".6"/><path d="M9.500 8l-5 1.500M5.500 7.500l-1.500 2 2.500 1" fill="none" stroke="#7a7a7a" stroke-width="1.200"/></g>
<g transform="translate(315 74)"><path d="M7 .3l2-2.300.7 7-2.700 3z" fill="#9a9a9a"/><path d="M-8.700 .3l4.700-2.300h13l-2 2.300z" fill="#c6c6c6" stroke="#a2a2a2" stroke-width=".5"/><path d="M-4.500-.2l1.500-1.300h8.500l-1.200 1.300z" fill="#7c7c7c"/><rect x="-8.700" y=".3" width="15.700" height="7.900" fill="url(#gv)" stroke="#9a9a9a" stroke-width=".5"/><path d="M0-9.600l5.700 5.600h-2.700v4h-6v-4h-2.700z" fill="#6e6e6e"/></g>
<g transform="translate(347 74)"><circle r="9.500" fill="#a9a9a9" stroke="#7a7a7a" stroke-width=".8"/><path d="M0 0l-8-5a9.500 9.500 0 0 1 8-4.500z" fill="#d6d6d6"/><path d="M0 0L9.500 0A9.500 9.500 0 0 0 3-9z" fill="#f2f1f0"/><circle r="3" fill="#f2f1f0" stroke="#7a7a7a" stroke-width=".8"/><path d="M0 0v9.500M0 0l-8-5" stroke="#7a7a7a" stroke-width=".8"/><path d="M5-6q4 2 4 8" fill="none" stroke="#666" stroke-width="1.400"/><path d="M3-8.500l4 .5-1.500 3.500z" fill="#666"/><circle cx="1" cy="1" r="1.400" fill="#fff"/></g>
<g transform="translate(378 74)"><path d="M-9.500-5l7-3v14l-7 3z" fill="url(#gv)" stroke="#8a8a8a" stroke-width=".7"/><path d="M9.500-5l-7-3v14l7 3z" fill="url(#gd)" stroke="#7a7a7a" stroke-width=".7"/><path d="M0-11v22" stroke="#555" stroke-width="1.300" stroke-dasharray="4 2"/></g>
<g transform="translate(410 74)"><path d="M-8.700-6.300l4.500-2.500 12.200-.5q1.500 2.500.5 5.300l-5.500 2.700h-11.700z" fill="#8d8d8d"/><path d="M-6.500-7.500l12.500-.8" stroke="#cfcfcf" stroke-width="1.300"/><path d="M-8.700-1.500h11.700v8.200h-11.700z" fill="url(#gv)"/><path d="M3-1.500l5.500-2.700q.5 2 0 3l-3 1.500q-1.500.8-1.500 2.200h5.800v4.500l-6.800 0z" fill="#a6a6a6"/><path d="M4 2.500h5.800l-1.300-1.500h-3q-1.500.3-1.500 1.500z" fill="#c9c9c9"/><path d="M5.500-.3l3-1.400q.3 1 0 2.200l-2.500.2z" fill="#f2f1f0"/><path d="M-8.700 6.700h11.700l6.800.3" stroke="#8e8e8e" stroke-width=".8" fill="none"/></g>
<g transform="translate(442 74)"><path d="M-8.700-6.300l4.500-2.500 12.200-.5q1.500 2.500.5 5.300l-5.500 2.700h-11.700z" fill="#8d8d8d"/><path d="M-6.500-7.500l12.500-.8" stroke="#cfcfcf" stroke-width="1.300"/><path d="M-8.700-1.500h11.700v8.200h-11.700z" fill="url(#gv)"/><path d="M3-1.500l5.500-2.700q.5 2 0 3l-3 1.500q-1.500.8-1.500 2.200h5.800v4.500l-6.800 0z" fill="#a6a6a6"/><path d="M4 2.500h5.800l-1.300-1.500h-3q-1.500.3-1.500 1.500z" fill="#c9c9c9"/><path d="M5.500-.3l3-1.400q.3 1 0 2.200l-2.500.2z" fill="#f2f1f0"/><path d="M-8.700 6.700h11.700l6.800.3" stroke="#8e8e8e" stroke-width=".8" fill="none"/></g>
<g transform="translate(473 74)"><path d="M-6.700-5.800l14.700-3.800v12.100l-14.700 4.200z" fill="url(#gv)" stroke="#a0a0a0" stroke-width=".9"/></g>
<g transform="translate(505 74)"><path d="M-2.500-9l9.200 3v9.800l-12.100 2.200v-5.700z" fill="url(#gd)" stroke="#8c8c8c" stroke-width=".6"/><path d="M-2.500-9l-2.900 9.300 3 .5 9.100-6.800z" fill="#8a8a8a" opacity=".5"/><path d="M-5.400 1l3.400-.5v5l-3.400.5z" fill="#f6f6f6" stroke="#9a9a9a" stroke-width=".5"/></g>
<g transform="translate(537 74)"><path d="M-.6-9l7.500-.6q1.500 12-8 18.500l-6.900-2.400q8.500-5 7.400-15.500z" fill="url(#gv)" stroke="#8a8a8a" stroke-width=".8"/><path d="M6.900-9.600q1.500 12-8 18.500" fill="none" stroke="#7f7f7f" stroke-width="1.600"/><path d="M9.500-11.500q0 5-2.500 9" fill="none" stroke="#8f8f8f" stroke-width="1.400"/><path d="M-10.500 5h4" stroke="#808080" stroke-width="1.800"/><rect x="-6.500" y="3" width="4" height="4" fill="#f7f7f7" stroke="#8a8a8a" stroke-width=".6"/></g>
<g transform="translate(567.500 74)"><path d="M-.5-9.600l6 5h-3v3.500h-6v-3.500h-3z" fill="#747474"/><path d="M-8.500 1.700l5.800-2.400h11.200l-6.300 2.700z" fill="#8e8e8e" stroke="#7a7a7a" stroke-width=".5"/><path d="M-8.500 6.700l6.500-2.200h10.500l-5.600 3.500z" fill="#a2a2a2" stroke="#868686" stroke-width=".5"/></g>
<g transform="translate(600 74)"><path d="M-9.700 1.700l6.700-3.500 12.400.5-4.900 3z" fill="#9a9a9a" stroke="#909090" stroke-width=".5"/><path d="M-6.500 1l4.500-2.200 9 .3-3.500 1.900z" fill="#7f7f7f"/><path d="M4.500 1.700l4.900-3v6.800l-4.900 2.500z" fill="#a8a8a8"/><rect x="-9.700" y="1.700" width="14.200" height="6.300" fill="url(#gv)" stroke="#9d9d9d" stroke-width=".5"/><ellipse cx="3" cy="8.500" rx="8" ry="1" fill="#b5b5b5" opacity=".6"/></g>
<g transform="translate(643 74)"><circle cx="3" cy="-3.500" r="6" fill="url(#gs)"/><ellipse cx="2" cy="7.500" rx="7" ry="1.800" fill="#a8a8a8"/><circle cx="-3" cy="1.500" r="7" fill="url(#gsd)"/></g>
<g transform="translate(674 74)"><ellipse cx="1" cy="7.500" rx="7" ry="1.800" fill="#a8a8a8"/><circle cx="-3" cy="1.500" r="7" fill="url(#gsd)"/><circle cx="3.500" cy="-4" r="6" fill="#fdfdfd" stroke="#8a8a8a" stroke-width=".8"/></g>
<g transform="translate(706 74)"><ellipse cx="2" cy="7.500" rx="7" ry="1.800" fill="#a8a8a8"/><circle cx="3.500" cy="-3.500" r="6.300" fill="url(#gsd)"/><circle cx="-3" cy="1.500" r="7" fill="url(#gsd)"/></g>
<g transform="translate(738 74)"><ellipse cx="0" cy="7.500" rx="6" ry="1.500" fill="#a8a8a8"/><circle cx="-3.500" cy="2" r="7" fill="#fdfdfd" stroke="#8a8a8a" stroke-width=".9"/><circle cx="3.500" cy="-3.500" r="6.300" fill="#fdfdfd" fill-opacity=".6" stroke="#8a8a8a" stroke-width=".9"/><path d="M-2.500-4.500a6.300 6.300 0 0 0 5.500 7 7 7 0 0 0-5.500-7z" fill="#777"/></g>
<g transform="translate(769 74)"><ellipse cx="2" cy="8" rx="8" ry="1.800" fill="#a8a8a8"/><path d="M-2-5l7 12.500a8 2.500 0 0 1-14 0z" fill="url(#gsd)"/><circle cx="-.5" cy="-6.500" r="4" fill="#ececec" stroke="#9a9a9a" stroke-width="1"/><path d="M2.500-3.500l6.500 5" stroke="#888" stroke-width="1.500"/></g>
<g transform="translate(801 74)"><path d="M-10-8l6-2h12v14l-6 3h-12z" fill="#b5b5b5" stroke="#9a9a9a" stroke-width=".6"/><path d="M-7-5h9v10h-9z" fill="#8a8a8a"/><path d="M-4-3h6v6h-6z" fill="#c9c9c9"/><path d="M8-4l3 1v7l-3 2z" fill="#a5a5a5"/></g>
<g transform="translate(833 74)"><path d="M-5-7l4-2.500 7 1.500v14l-4 3-7-2z" fill="#8a8a8a" stroke="#777" stroke-width=".5"/><path d="M-5-7l7 1.500 4-3M2-5.500v14" fill="none" stroke="#bbb" stroke-width=".7"/><path d="M-11-3l9-2.500 12 2.500-9 3z" fill="#c9c9c9" fill-opacity=".8" stroke="#aaa" stroke-width=".5"/><path d="M-11 4l9-2.500 12 2.500-9 3z" fill="#c9c9c9" fill-opacity=".8" stroke="#aaa" stroke-width=".5"/></g>
</svg>
<div class="abs" style="left:57px;top:21px;width:1143px;height:1px;background:#fbfbfa"></div>
<!-- handles & separators -->
<div class="hnd" style="left:61px;top:35px"></div><div class="hnd" style="left:61px;top:71px"></div>
<div class="hnd" style="left:293px;top:71px"></div><div class="hnd" style="left:620px;top:71px"></div>
<div class="hnd" style="left:661px;top:35px"></div><div class="hnd" style="left:799px;top:35px"></div>
<div class="sep" style="left:198px;top:28px;height:21px"></div>
<div class="sep" style="left:302px;top:28px;height:21px"></div>
<div class="sep" style="left:410px;top:28px;height:21px"></div>
<div class="sep" style="left:451px;top:28px;height:21px"></div>
<div class="sep" style="left:841px;top:28px;height:21px"></div>
<div class="sep" style="left:883px;top:28px;height:21px"></div>
<div class="sep" style="left:987px;top:28px;height:21px"></div>
<div class="sep" style="left:1092px;top:28px;height:21px"></div>
<!-- workbench combo -->
<div class="btn" style="left:458px;top:28px;width:166px;height:20px;border-color:#a9a59f"></div>
<svg style="left:462px;top:30px" width="16" height="16" viewBox="0 0 16 16"><path d="M1.500 3.500l9 .5v10l-9-1z" fill="#0a1cf0" stroke="#000" stroke-width=".9"/><path d="M10.500 4l3.500-2.500v9.500l-3.500 3z" fill="#0514b0" stroke="#000" stroke-width=".9"/><path d="M1.500 3.500l3.500-2 9 0-3.500 2.500z" fill="#1d36ff" stroke="#000" stroke-width=".9"/></svg>
<div class="txt" style="left:480px;top:30.500px;font-size:13.500px;letter-spacing:-.25px">Part</div>
<svg style="left:612px;top:32px" width="7" height="13" viewBox="0 0 7 13"><path d="M1 4.500l2.500-3 2.500 3zM1 8.500l2.500 3 2.500-3z" fill="#777"/></svg>
<!-- row 3 -->
<div class="txt" style="left:65px;top:103px;font-size:13.300px;letter-spacing:-.2px">active command:</div>
<div class="txt" style="left:169.500px;top:103px;font-size:13.300px;font-weight:bold;letter-spacing:-.45px">None</div>
<div class="btn" style="left:921px;top:100px;width:73px;height:21px"></div>
<svg style="left:932px;top:103px" width="15" height="16" viewBox="0 0 15 16"><path d="M3 4.500l8-2 1.500 8.500-8 2z" fill="#6fc9c6" fill-opacity=".5" stroke="#1f8f90" stroke-width="1.400"/><path d="M2 2l2 13M12 .5l2 13M.5 5.500l13-3M1.500 13l13-3" stroke="#1f8f90" stroke-width=".7"/></svg>
<div class="txt" style="left:950.500px;top:103px;font-size:13.300px;letter-spacing:-.4px">None</div>
<div class="btn" style="left:1001px;top:100px;width:18px;height:21px"></div>
<svg style="left:1003px;top:104px" width="14" height="13" viewBox="0 0 14 13"><rect x="1" y="5" width="8" height="4.500" rx="2.200" fill="none" stroke="#198a8a" stroke-width="1.600" transform="rotate(-30 5 7)"/><rect x="5.500" y="3" width="8" height="4.500" rx="2.200" fill="none" stroke="#35b0a6" stroke-width="1.600" transform="rotate(-30 9 5)"/></svg>
<div class="btn" style="left:1026px;top:100px;width:18px;height:21px"></div><div class="abs" style="left:1028px;top:103px;width:14px;height:15px;background:#000"></div>
<div class="btn" style="left:1050px;top:100px;width:18px;height:21px"></div><div class="abs" style="left:1053px;top:103px;width:13px;height:15px;background:#cbcbcb"></div>
<div class="spin" style="left:1075px;top:102px;width:42px;height:18px"><span style="left:4.500px;font-size:13.500px;letter-spacing:-.4px;margin-top:-7.500px">2px</span><div class="ar" style="width:14px"></div></div>
<div class="spin" style="left:1124px;top:102px;width:42px;height:18px;overflow:hidden"><span style="left:4px;font-size:13.500px;letter-spacing:-.25px;margin-top:-7.500px">0,20</span><div class="ar" style="width:14px"></div></div>
<div class="btn" style="left:1173px;top:100px;width:18px;height:21px"></div>
<svg style="left:1175px;top:103px" width="14" height="15" viewBox="0 0 14 15"><rect x="1" y="1" width="4" height="3" fill="#e02020"/><rect x="1" y="4" width="4" height="3" fill="#f0c020"/><rect x="1" y="7" width="4" height="3" fill="#30b030"/><rect x="1" y="10" width="4" height="3" fill="#2050d0"/><path d="M5 6h4v-2.500l4.500 4-4.500 4v-2.500h-4z" fill="#3a78d8" stroke="#1c4a9a" stroke-width=".7"/></svg>
<!-- dock splitter dots -->
<div class="abs" style="left:626px;top:131px;width:7px;height:3px;background:repeating-linear-gradient(90deg,#bdbab5 0 1px,transparent 1px 2px)"></div>
<!-- combo view -->
<div class="txt" style="left:59px;top:139px;font-size:13.500px;letter-spacing:-.36px">Combo View</div>
<svg style="left:290px;top:141px" width="26" height="11" viewBox="0 0 26 11" fill="none" stroke="#55524e"><rect x=".5" y=".5" width="9.500" height="9.500" rx="2" stroke-width=".9"/><rect x="4" y="2.500" width="4" height="4" rx=".8" stroke-width=".8"/><rect x="2.500" y="4.500" width="4" height="4" rx=".8" stroke-width=".8" fill="#f2f1f0"/><rect x="15" y=".5" width="9.500" height="9.500" rx="2" stroke-width=".9"/><path d="M17.500 3l4.600 4.600M22.100 3l-4.600 4.600" stroke="#3c3c3c" stroke-width="1.500"/></svg>
<!-- pane -->
<div class="abs" style="left:57px;top:183px;width:261px;height:466px;background:#cbc8c4;border:1px solid #b3afa9;border-left:2px solid #f3f2f0;border-right:2px solid #dedcd8;border-radius:3px 3px 0 0;box-shadow:inset -1px 0 0 #b3afa9,inset 1px 0 0 #bab7b1,inset 0 1px 0 #efeeec"></div>
<!-- tabs -->
<div class="abs" style="left:58px;top:161px;width:56px;height:23px;border:1px solid #bab6b0;border-bottom:1px solid #b3afa9;border-radius:4px 4px 0 0;background:linear-gradient(#eeecea,#e2dfdb)"></div>
<div class="txt" style="left:64px;top:163.500px;font-size:13.500px;letter-spacing:-.09px">Project</div>
<div class="abs" style="left:113px;top:157px;width:45px;height:27px;border:1px solid #bab6b0;border-bottom:0;border-radius:4px 4px 0 0;background:linear-gradient(#fbfbfa,#f2f1f0)"></div>
<div class="txt" style="left:120.500px;top:163px;font-size:13.500px;letter-spacing:-.8px">Tasks</div>
<!-- buttons -->
<div class="btn" style="left:111px;top:202px;width:72px;height:21px;border-color:#aaa69f"></div>
<div class="txt" style="left:111px;top:204.500px;width:72px;text-align:center;font-size:13.500px;letter-spacing:-.1px">Apply</div>
<div class="btn" style="left:191px;top:202px;width:72px;height:21px;border-color:#aaa69f"></div>
<div class="txt" style="left:191px;top:204.500px;width:72px;text-align:center;font-size:13.500px;letter-spacing:-.66px"><span style="text-decoration:underline;text-underline-offset:2px">C</span>lose</div>
<!-- extrude panel -->
<div class="abs" style="left:67px;top:239px;width:241px;height:22px;background:linear-gradient(#ee7645,#f3946c)"></div>
<div class="abs" style="left:67px;top:261px;width:241px;height:378px;background:#f2f1f0"></div>
<svg style="left:70px;top:240px" width="20" height="20" viewBox="0 0 20 20"><path d="M1.600 12l4-2.300h10l3.400 2.300v5.500l-4 1.500h-13.400z" fill="#4f86d2" stroke="#1d478f" stroke-width=".8"/><path d="M1.600 12h13.400l4-2M15 12v7" fill="none" stroke="#b9d2f3" stroke-width=".8"/><path d="M5.500 11.300l2-1h6l-1.500 1z" fill="#16306e"/><path d="M9.500 2.200l6 5h-3v3.800h-6v-3.800h-3z" fill="#1a3a8c" stroke="#0c2060" stroke-width=".5"/></svg>
<div class="txt" style="left:93px;top:243px;font-size:13.500px;font-weight:bold;color:#fff;letter-spacing:-.37px">Extrude</div>
<svg style="left:290px;top:243px" width="14" height="14" viewBox="0 0 14 14"><circle cx="7" cy="7" r="6.500" fill="#fdf3ee"/><path d="M4 6.500l3-3 3 3M4 10.500l3-3 3 3" fill="none" stroke="#e8703c" stroke-width="1.500"/></svg>
<div class="txt" style="left:78px;top:275px;font-size:13.300px;font-weight:bold;letter-spacing:-.12px">Direction</div>
<div class="txt" style="left:90px;top:299px;width:48px;text-align:right;font-size:13.500px;letter-spacing:-.5px">X:</div>
<div class="spin" style="left:144px;top:295px;width:111px;height:22px"><span>0,00</span><div class="ar"></div></div>
<div class="txt" style="left:90px;top:328px;width:48px;text-align:right;font-size:13.500px;letter-spacing:-.5px">Y:</div>
<div class="spin" style="left:144px;top:324px;width:111px;height:22px"><span>0,00</span><div class="ar"></div></div>
<div class="txt" style="left:90px;top:357px;width:48px;text-align:right;font-size:13.500px;letter-spacing:-.5px">Z:</div>
<div class="spin" style="left:144px;top:353px;width:111px;height:22px"><span>1,00</span><div class="ar"></div></div>
<div class="txt" style="left:80px;top:386px;width:58px;text-align:right;font-size:13.500px;letter-spacing:-.17px">Length:</div>
<div class="spin" style="left:144px;top:382px;width:111px;height:22px;border-color:#e8744a"><span style="background:#f07746;color:#fff;padding:0 1px;left:5px;margin-top:-7px;line-height:15px;letter-spacing:-.47px">10,000</span><div class="ar" style="border-top:1px solid #b7b3ad;border-right:1px solid #b7b3ad;border-bottom:1px solid #b7b3ad;margin:-1px -1px -1px 0;width:14px"></div></div>
<div class="abs" style="left:96px;top:414px;width:12px;height:12px;border:1px solid #aaa69f;border-radius:2px;background:#fff"></div>
<div class="txt" style="left:115.500px;top:412.500px;font-size:13.500px;letter-spacing:-.12px">Along normal</div>
<div class="abs" style="left:81px;top:448px;width:12px;height:12px;border:1px solid #b8562c;border-radius:2px;background:linear-gradient(#f58a5c,#e8693a)"></div>
<svg style="left:81px;top:446px" width="14" height="14" viewBox="0 0 14 14"><path d="M3 7.500l2.800 3.500 5.200-8.500" fill="none" stroke="#4a2a1c" stroke-width="1.800"/></svg>
<div class="txt" style="left:100.500px;top:446.500px;font-size:13.500px;letter-spacing:-.24px">Create solid</div>
<div class="txt" style="left:78.500px;top:474px;font-size:13.500px;letter-spacing:-.15px">Taper outward angle</div>
<div class="spin" style="left:206px;top:470px;width:89px;height:22px"><span>0,00</span><div class="ar"></div></div>
<!-- list -->
<div class="abs" style="left:78px;top:498px;width:218px;height:130px;border:1px solid #b7b3ad;background:#fff"></div>
<div class="abs" style="left:79px;top:499px;width:216px;height:21px;background:linear-gradient(#fafaf9,#eceae8);border-bottom:1px solid #c9c6c1"></div>
<div class="txt" style="left:82.500px;top:502.500px;font-size:13.500px;letter-spacing:-.72px">Shape</div>
<div class="abs" style="left:79px;top:521px;width:216px;height:17px;background:linear-gradient(#e0dfdd,#d5d3d0)"></div>
<svg style="left:82px;top:523px" width="12" height="13" viewBox="0 0 12 13"><path d="M1 3l7 .5v8l-7-.8z" fill="#3a3ac8" stroke="#15155a" stroke-width=".7"/><path d="M8 3.500l3-2v7.500l-3 2.500z" fill="#2a2a9a" stroke="#15155a" stroke-width=".7"/><path d="M1 3l3-2h7l-3 2.500z" fill="#5a5ae0" stroke="#15155a" stroke-width=".7"/></svg>
<div class="txt" style="left:101px;top:522px;font-size:13.500px;letter-spacing:-.15px">path2985</div>
<!-- splitter -->
<div class="abs" style="left:318px;top:387px;width:3px;height:9px;background:repeating-linear-gradient(#bdbab5 0 1px,transparent 1px 2px)"></div>
<!-- 3D view -->
<div class="abs" style="left:322px;top:135px;width:878px;height:485px;background:linear-gradient(#333365,#9797aa);border-top:1px solid rgba(10,10,60,.45);box-shadow:-1px -1px 0 #fbfbfa"></div><div class="abs" style="left:322px;top:135px;width:1px;height:485px;background:linear-gradient(rgba(10,10,60,.5),rgba(10,10,60,.25) 50%,rgba(10,10,60,0) 90%)"></div>
<svg style="left:0;top:0" width="1200" height="675" viewBox="0 0 1200 675" fill="none">
<!-- axes -->
<path d="M764 364.500L763 238" stroke="#1a1a8c" stroke-width="1.500"/>
<path d="M763 216l-4 22.500h8.200z" fill="#252594"/>
<path d="M764 364.500L833.500 314.500" stroke="#1d6a1d" stroke-width="1.400"/>
<path d="M846 306l-15.500 4.500 5 7.500z" fill="#1f5f1f"/><circle cx="834" cy="314" r="3.500" fill="#268026"/>
<path d="M764 364.500L884 392.500" stroke="#a01c1c" stroke-width="1.500"/>
<path d="M903.500 397.800l-17.500-8.600-2.500 7z" fill="#8c2222"/><path d="M903.500 397.800l-17.500-8.600-1 3z" fill="#5a2020"/>
<!-- wire -->
<path d="M735 257.700L544.500 318L504 352.500Q499 357 495.500 362.500L468.300 405.500Q465 411 473.200 413Q492 416 520.600 406.500L652.800 367L664.800 368.300Q670 373 664 380L592 441.500Q587.500 448 594 450Q600 451 605 449.300L756.200 384.400L766 383Q770 385.500 767.600 390.500L709.400 465.800Q708 469 712.400 469.300Q718 470.500 724.200 468.100L831.500 416.800Q846 410.500 853.900 413.800Q859.500 418 855.400 430.500L808.700 503.500Q806.500 509.500 816.700 511.500Q823 512.800 829.200 512Q858 504.500 884 493.200L997 423.700L1062.700 328.700L861.800 394.400L947.700 316.300L779.200 362L799 303.300L668.700 344.300Z" stroke="#1cb41c" stroke-width="1.400" stroke-linejoin="round"/>
<g fill="#45ee45" stroke="#1cbc1c" stroke-width=".5" shape-rendering="crispEdges">
<rect x="733.3" y="256" width="3.400" height="3.400"/><rect x="542.8" y="316.3" width="3.400" height="3.400"/><rect x="471.5" y="411.3" width="3.400" height="3.400"/><rect x="663.1" y="366.6" width="3.400" height="3.400"/><rect x="592.3" y="448.3" width="3.400" height="3.400"/><rect x="764.3" y="381.3" width="3.400" height="3.400"/><rect x="710.7" y="467.6" width="3.400" height="3.400"/><rect x="852.2" y="412.1" width="3.400" height="3.400"/><rect x="815" y="509.8" width="3.400" height="3.400"/><rect x="995.3" y="422" width="3.400" height="3.400"/><rect x="1061" y="327" width="3.400" height="3.400"/><rect x="860.1" y="392.7" width="3.400" height="3.400"/><rect x="946" y="314.6" width="3.400" height="3.400"/><rect x="777.5" y="360.3" width="3.400" height="3.400"/><rect x="797.3" y="301.6" width="3.400" height="3.400"/><rect x="667" y="342.6" width="3.400" height="3.400"/>
</g>
<!-- corner axis -->
<path d="M1175.400 595V578.500" stroke="#101088" stroke-width="1.600"/>
<path d="M1175.400 595l7.300-4.500" stroke="#1a8a1a" stroke-width="1.600"/>
<path d="M1175.400 595.500l16.600 4" stroke="#8c1414" stroke-width="1.600"/>
<path d="M1175.400 580.500l-1.400 3.500h2.800z" fill="#101088"/><path d="M1182.700 590.500l-3.200.6 1.400 2z" fill="#1a8a1a"/><path d="M1188.500 598.700l-3.600-2.500-.7 2.800z" fill="#8c1414"/><g font-family="Liberation Sans,DejaVu Sans,sans-serif" font-size="8.800" fill="#000" stroke="#000" stroke-width=".25"><text x="1177.600" y="578">Z</text><text x="1185" y="590.500">Y</text><text x="1194.300" y="599.500">X</text></g>
</svg>
<!-- bottom tabs -->
<div class="abs" style="left:322px;top:620px;width:878px;height:1px;background:#e6e4e1"></div>
<div class="abs" style="left:323px;top:620px;width:97px;height:25px;border:1px solid #c4c0ba;border-top:0;border-radius:0 0 4px 4px;background:linear-gradient(#e6e4e1,#efeeec)"></div>
<div class="txt" style="left:329.500px;top:626px;font-size:13.500px;letter-spacing:-.21px">Start page</div>
<div class="abs" style="left:419px;top:620px;width:137px;height:28px;border:1px solid #c4c0ba;border-top:0;border-radius:0 0 4px 4px;background:linear-gradient(#f2f1f0,#fbfbfa)"></div>
<svg style="left:425px;top:626px" width="14" height="14" viewBox="0 0 14 14"><path d="M1 1h7v2.500h-4v2.500h3v2.500h-3v4h-3z" fill="#e8301a"/><g transform="translate(8.700 8)"><g fill="#1c2f9a"><rect x="-1.200" y="-5" width="2.400" height="10"/><rect x="-1.200" y="-5" width="2.400" height="10" transform="rotate(45)"/><rect x="-1.200" y="-5" width="2.400" height="10" transform="rotate(90)"/><rect x="-1.200" y="-5" width="2.400" height="10" transform="rotate(135)"/></g><circle r="3.600" fill="#1c2f9a"/><circle r="1.500" fill="#f5f5f5"/></g></svg>
<div class="txt" style="left:446.500px;top:627px;font-size:13.500px;letter-spacing:-.35px">Unnamed : 1*</div>
<svg style="left:398px;top:629px" width="11" height="11" viewBox="0 0 11 11"><path d="M1.800 1.800l7.400 7.400M9.200 1.800l-7.400 7.400" stroke="#5a5a58" stroke-width="3"/></svg>
<svg style="left:534.500px;top:630px" width="11" height="11" viewBox="0 0 11 11"><path d="M1.800 1.800l7.400 7.400M9.200 1.800l-7.400 7.400" stroke="#5a5a58" stroke-width="3"/></svg>
<!-- status bar -->
<div class="abs" style="left:318px;top:648px;width:882px;height:1px;background:#e6e4e1"></div>
<div class="txt" style="right:2px;top:655.500px;font-size:13.500px;letter-spacing:-.46px">179.38 x 98.94 mm</div>
</body></html>
